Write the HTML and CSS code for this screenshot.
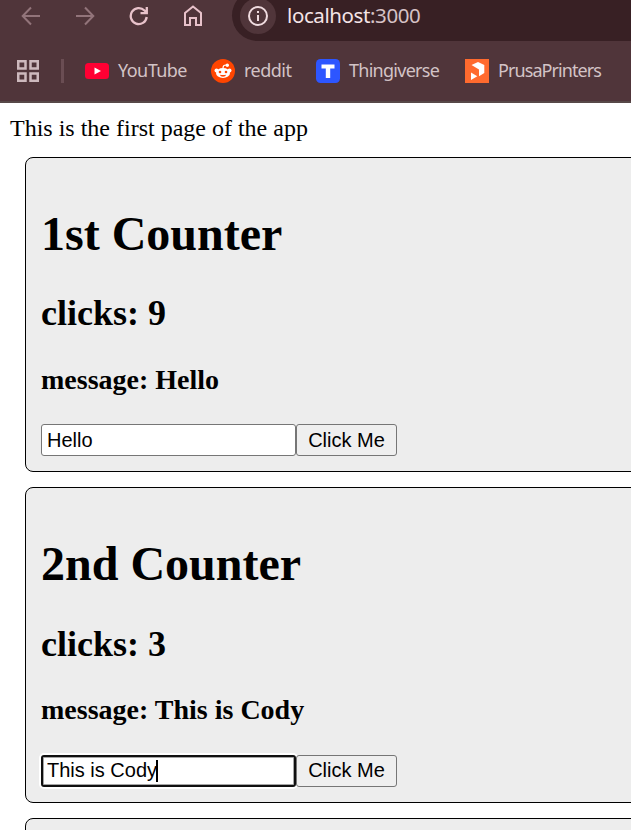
FILE: index.html
```html
<!DOCTYPE html>
<html lang="en">
<head>
<meta charset="utf-8">
<title>localhost:3000</title>
<link rel="stylesheet" href="styles.css">
</head>
<body>
<header class="chrome">
  <div class="toolbar">
    <svg class="nav dim" viewBox="0 0 20 20"><path d="M19 10H2M10 1.500L1.700 10L10 18.500"/></svg>
    <svg class="nav dim" viewBox="0 0 20 20"><path d="M1 10h17M10 1.500L18.300 10L10 18.500"/></svg>
    <svg class="nav reload" viewBox="0 0 20 20"><path d="M17.700 11A8 8 0 1 1 15.500 4.500L17.500 6.500M17.800 1V7.200H11.500"/></svg>
    <svg class="nav home" viewBox="0 0 20 22"><path d="M2 8L10 1.500L18 8V20H13V13H7V20H2Z"/></svg>
    <div class="address">
      <span class="info"><svg viewBox="0 0 20 20"><circle cx="10" cy="10" r="9"/><path d="M10 9v6M10 5v2"/></svg></span>
      <span class="url">localhost<span class="port">:3000</span></span>
    </div>
  </div>
  <nav class="bookmarks">
    <svg class="apps" viewBox="0 0 22 22"><path d="M1.250 1.250h7.250v7.250h-7.250zM13.500 1.250h7.250v7.250h-7.250zM1.250 13.500h7.250v7.250h-7.250zM13.500 13.500h7.250v7.250h-7.250z"/></svg>
    <span class="divider"></span>
    <a class="bookmark youtube"><svg viewBox="0 0 24 24"><rect y="4" width="24" height="16" rx="3.500" fill="#ff0033"/><path d="M9.500 8.500L16 12L9.500 15.500Z" fill="#fff"/></svg><span>YouTube</span></a>
    <a class="bookmark reddit"><svg viewBox="0 0 24 24"><circle cx="12" cy="12" r="12" fill="#ff4500"/><path d="M12 9Q12 6 15 6" fill="none" stroke="#fff" stroke-width="1.200"/><g fill="#fff"><circle cx="16.300" cy="6.300" r="1.700"/><circle cx="5.500" cy="11.500" r="2"/><circle cx="18.500" cy="11.500" r="2"/><ellipse cx="12" cy="14" rx="7" ry="5"/></g><g fill="#ff4500"><circle cx="9" cy="13" r="1.300"/><circle cx="15" cy="13" r="1.300"/><path d="M8.800 15.700Q12 16.300 15.200 15.700Q14.500 17.800 12 17.800Q9.500 17.800 8.800 15.700Z"/></g></svg><span>reddit</span></a>
    <a class="bookmark thingiverse"><svg viewBox="0 0 24 24"><rect width="24" height="24" rx="4.500" fill="#2d56ff"/><path d="M5.500 5.500h13v4h-4.300v9.500h-4.400v-9.500H5.500z" fill="#fff"/></svg><span>Thingiverse</span></a>
    <a class="bookmark prusa"><svg viewBox="0 0 24 24"><path d="M0 0h24v24H0z" fill="#ff6a2e"/><path d="M6.500 6L13 3L19.300 6V14L14 17.200V10.500ZM6 13.500L12.300 17.300L6 21Z" fill="#fff"/></svg><span>PrusaPrinters</span></a>
  </nav>
</header>
<main class="page">
  <div class="intro">This is the first page of the app</div>
  <section class="counter">
    <h1>1st Counter</h1>
    <h2>clicks: 9</h2>
    <h3>message: Hello</h3>
    <div class="controls"><div class="field"><input type="text" value="Hello"></div><button>Click Me</button></div>
  </section>
  <section class="counter">
    <h1>2nd Counter</h1>
    <h2>clicks: 3</h2>
    <h3>message: This is Cody</h3>
    <div class="controls"><div class="field active"><input type="text" value="This is Cody"><span class="caret"></span></div><button>Click Me</button></div>
  </section>
  <section class="counter"></section>
</main>
</body>
</html>
```
FILE: styles.css
```css
* { box-sizing: border-box; }
html, body { height: 830px; overflow: hidden; }
body { margin: 0; background: #fff; color: #000; font: 24px "Liberation Serif", serif; }

.chrome { height: 103px; background: #50353a; border-bottom: 2px solid #574848; overflow: hidden; font-family: "Noto Sans", sans-serif; }
.toolbar { display: flex; height: 41px; padding-left: 21px; }
.nav { flex: none; width: 20px; height: 20px; margin: 6px 34px 0 0; fill: none; stroke: #e8c2ca; stroke-width: 2; }
.nav.dim { stroke: #92747a; }
.reload { stroke-width: 2.3; }
.home { height: 22px; margin-top: 5px; margin-right: 29px; }
.address { display: flex; flex: 1; height: 51px; margin-top: -10px; padding: 8px 8px; border-radius: 26px 0 0 26px; background: #382024; }
.info { display: flex; align-items: center; justify-content: center; width: 36px; height: 36px; border-radius: 50%; background: #50353a; }
.info svg { width: 20px; height: 20px; fill: none; stroke: #f0dce0; stroke-width: 2; }
.url { margin-left: 11px; color: #f4e4e7; font-size: 20.5px; line-height: 35px; letter-spacing: -0.4px; }
.port { color: #d6c2c6; }

.bookmarks { display: flex; align-items: center; height: 60px; padding-left: 17px; color: #d3c3c6; font-size: 18px; line-height: 24px; }
.apps { flex: none; width: 22px; height: 22px; fill: none; stroke: #cdb9bd; stroke-width: 2.5; }
.divider { flex: none; width: 3px; height: 24px; margin: 0 21px 0 22px; background: #6a4d53; }
.bookmark { display: flex; flex: none; align-items: center; white-space: nowrap; }
.bookmark svg { width: 24px; height: 24px; margin-right: 9px; }
.bookmark span { padding-bottom: 2px; }
.youtube { width: 126px; letter-spacing: -0.55px; }
.reddit { width: 105px; letter-spacing: -0.5px; }
.thingiverse { width: 149px; letter-spacing: -0.73px; }
.prusa { letter-spacing: -0.92px; }

.page { height: 727px; padding-left: 10px; overflow: hidden; }
.intro { height: 53.67px; padding-top: 11px; line-height: 28px; }
.counter { width: 640px; height: 315.67px; margin: 0 0 15px 15px; padding: 15px; border: 1px solid #000; border-radius: 8px; background: #ededed; }
h1, h2, h3 { margin: 0; white-space: nowrap; }
h1 { margin-top: 33px; font-size: 48px; line-height: 55px; }
h2 { margin-top: 32.4px; font-size: 36px; line-height: 41px; }
h3 { margin-top: 29.6px; font-size: 28px; line-height: 32px; }
.controls { display: flex; margin-top: 28.4px; }
.field { position: relative; }
input, button { display: block; height: 32px; margin: 0; border: 1px solid #767676; border-radius: 3px; color: #000; font: 20px "Liberation Sans", sans-serif; }
input { width: 255px; padding: 0 5px; background: #fff; outline: none; }
.active input { padding: 0 4px; border: 2px solid #101010; box-shadow: inset 0 0 0 1px #a5a5a5, 0 0 0 2px #fff; }
button { position: relative; width: 101px; padding: 0; background: #efefef; }
.caret { position: absolute; top: 5px; left: 115px; width: 2px; height: 22px; background: #000; }
```
